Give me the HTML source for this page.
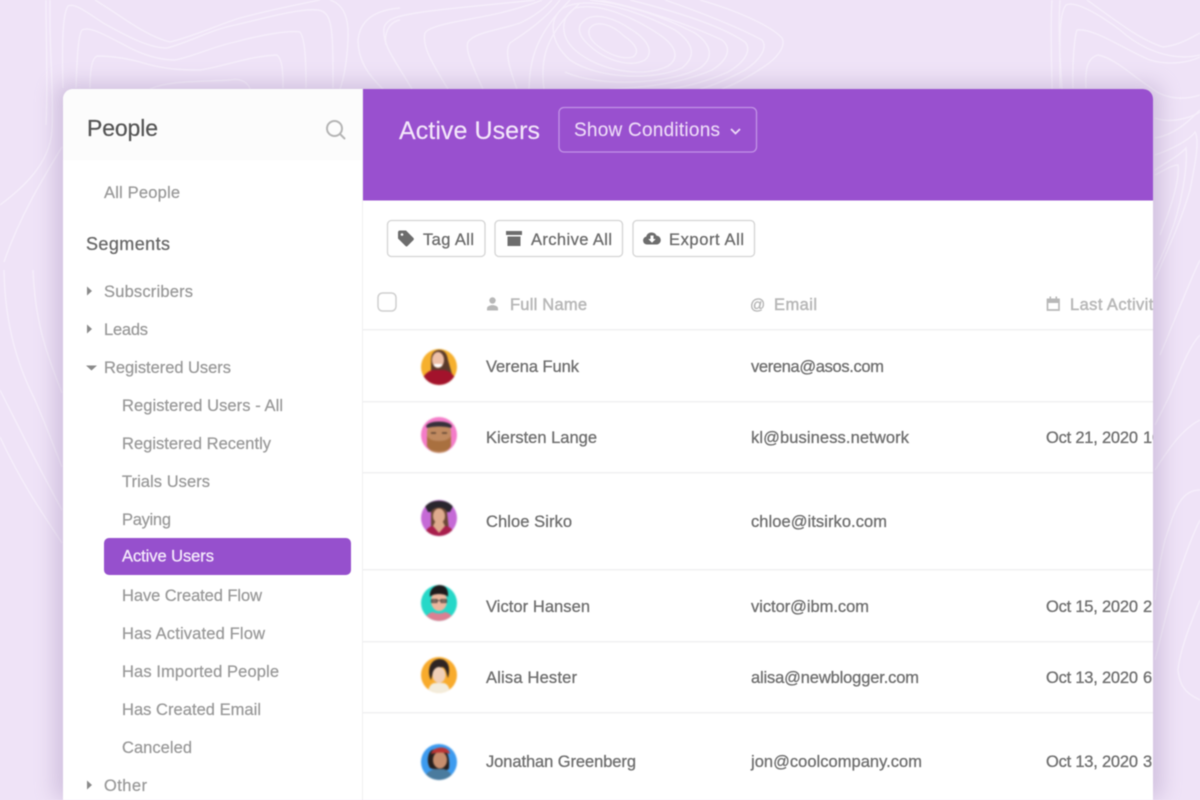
<!DOCTYPE html>
<html lang="en">
<head>
<meta charset="utf-8">
<title>Active Users</title>
<style>
html,body{margin:0;padding:0;width:1200px;height:800px;overflow:hidden;background:#efe3f7}
svg{display:block;position:absolute;left:0;top:0;font-family:"Liberation Sans",sans-serif}
#all{filter:blur(.55px)}
.s{font-size:16.5px;fill:#9a9a9a;stroke:#9a9a9a;stroke-width:.25}
.r{font-size:16.5px;fill:#707070;stroke:#707070;stroke-width:.32}
.h{font-size:16.5px;fill:#b8b8b8;stroke:#b8b8b8;stroke-width:.5}
.b{font-size:16.5px;fill:#6c6c6c;stroke:#6c6c6c;stroke-width:.3}
.t{fill:none;stroke:#f8f2fc;stroke-width:1.4;opacity:.8}
.av{filter:blur(.7px)}
</style>
</head>
<body>
<svg id="all" width="1200" height="800" viewBox="0 0 1200 800" xmlns="http://www.w3.org/2000/svg">
<defs>
<filter id="sh" x="-6%" y="-8%" width="112%" height="116%"><feGaussianBlur stdDeviation="11"/></filter>
<clipPath id="main"><rect x="363" y="89" width="790" height="711"/></clipPath>
<clipPath id="a1"><circle cx="439" cy="367" r="18"/></clipPath>
<clipPath id="a2"><circle cx="439" cy="435" r="18"/></clipPath>
<clipPath id="a3"><circle cx="439" cy="518" r="18"/></clipPath>
<clipPath id="a4"><circle cx="439" cy="603" r="18"/></clipPath>
<clipPath id="a5"><circle cx="439" cy="675" r="18"/></clipPath>
<clipPath id="a6"><circle cx="439" cy="762" r="18"/></clipPath>
</defs>

<rect width="1200" height="800" fill="#efe3f7"/>

<g class="t">
<path d="M50 0C49 50 54 90 52 130C50 165 20 190 0 205"/>
<path d="M46 0C46 40 48 90 46 125"/>
<path d="M62 147C45 175 20 215 4 262"/>
<path d="M63 88C62 50 62 15 68 6C75 2 90 15 105 24C130 38 150 48 167 48C190 42 210 30 235 25C265 18 300 8 318 10C333 12 333 30 333 88"/>
<path d="M95 0C120 15 145 36 170 42C195 36 220 24 240 18C270 10 300 4 320 0"/>
<path d="M76 88C77 60 78 35 82 30C90 26 105 35 130 48C150 58 165 60 175 60C195 56 215 46 235 42C260 35 290 30 300 32C306 40 306 70 306 88"/>
<path d="M90 88C90 70 92 58 97 56C110 56 125 58 140 62C165 70 185 70 200 70C225 66 250 56 277 55C283 60 283 75 283 88"/>
<path d="M150 89C170 80 200 82 230 80C240 78 248 82 250 89"/>
<path d="M330 0C345 5 349 20 348 40C347 60 345 75 340 89"/>
<path d="M400 8C375 10 360 20 358 40C358 60 368 75 383 89"/>
<path d="M400 20C388 22 384 35 386 45"/>
<path d="M4 270C5 330 20 370 35 400C48 430 55 450 62 467"/>
<path d="M33 270C35 320 45 350 62 393"/>
<path d="M0 390C20 430 40 470 62 510"/>
<path d="M0 437C20 480 40 510 62 543"/>
<path d="M412 89C395 60 382 45 384 28C386 18 400 15 430 11C470 6 510 3 535 0"/>
<path d="M448 89C430 60 422 45 425 33C430 24 470 20 500 13C520 8 535 3 542 0"/>
<path d="M483 89C472 65 465 50 468 42C475 32 500 30 520 23C535 16 545 8 552 0"/>
<path d="M517 89C508 65 505 50 510 43C525 33 545 20 560 0"/>
<path d="M529 89C530 60 535 35 570 0"/>
<path d="M544 89C540 60 545 35 580 3"/>
<path d="M590 28C596 20 612 24 624 36C636 44 640 52 633 57C622 60 608 54 598 46C590 40 587 33 590 28Z"/>
<path d="M585 20C595 12 615 18 632 30C648 40 654 52 645 60C630 68 605 60 590 46C578 36 576 26 585 20Z"/>
<path d="M575 8C600 2 635 18 660 35C676 46 680 58 668 66C645 78 600 72 575 50C560 36 560 18 575 8Z"/>
<path d="M563 8C590 -6 640 12 675 30C692 42 698 55 682 68C655 80 600 80 570 60C550 42 548 20 563 8Z"/>
<path d="M590 0C630 4 665 18 695 33C712 45 714 58 700 68C670 84 600 88 565 72"/>
<path d="M600 0C640 8 690 25 722 40C732 48 728 60 712 70C680 84 640 88 610 89"/>
<path d="M630 0C670 10 720 25 745 42C752 50 745 62 728 72C710 80 690 86 670 89"/>
<path d="M665 0C700 12 740 28 762 40C768 48 760 60 745 70C730 78 715 85 700 89"/>
<path d="M700 0C735 10 770 25 782 38C786 46 778 58 762 68C750 76 735 84 722 89"/>
<path d="M1052 0C1050 30 1052 70 1052 89M1060 0C1058 30 1060 60 1062 89"/>
<path d="M1087 0C1115 20 1140 40 1163 47C1180 45 1190 38 1200 33"/>
<path d="M1060 88C1060 50 1058 15 1066 5C1075 0 1100 15 1120 30C1140 48 1170 62 1200 55"/>
<path d="M1073 88C1072 60 1075 35 1077 30C1095 28 1125 50 1150 60C1170 66 1190 62 1200 57"/>
<path d="M1086 88C1085 70 1087 58 1098 55C1115 58 1135 78 1150 87C1165 100 1185 100 1200 95"/>
<path d="M1155 118C1170 124 1190 118 1200 112"/>
<path d="M1155 138C1175 135 1190 120 1200 110"/>
<path d="M1155 155C1170 150 1190 140 1195 132C1200 140 1195 165 1190 190C1180 225 1165 255 1155 280"/>
<path d="M1155 170C1170 160 1180 155 1186 148C1188 170 1180 210 1170 235C1165 250 1160 260 1155 270"/>
<path d="M1155 175C1165 170 1172 165 1178 165C1180 180 1170 210 1160 235"/>
<path d="M1200 260C1190 280 1175 320 1160 355"/>
<path d="M1200 335C1190 345 1180 370 1170 395C1165 405 1160 415 1155 425"/>
<path d="M1200 420C1180 430 1165 455 1155 470"/>
<path d="M1200 490C1180 490 1175 510 1165 540C1160 560 1157 580 1155 600"/>
<path d="M1200 520C1190 540 1180 570 1170 600C1165 620 1160 640 1155 660"/>
<path d="M1200 600C1190 625 1180 650 1178 670C1180 690 1190 695 1200 700"/>
</g>

<rect x="55" y="84" width="1106" height="716" rx="8" fill="#8d74a8" opacity=".32" filter="url(#sh)"/>
<path d="M63 99a10 10 0 0 1 10-10H1143a10 10 0 0 1 10 10V800H63Z" fill="#fff"/>
<path d="M63 99a10 10 0 0 1 10-10H362V160H63Z" fill="#fcfcfc"/>
<rect x="362" y="89" width="1" height="711" fill="#efeff0"/>

<path d="M363 89H1143a10 10 0 0 1 10 10V200.500H363Z" fill="#9950cf"/>

<text x="87" y="136" font-size="23" fill="#555" stroke="#555" stroke-width=".2" textLength="71" lengthAdjust="spacing">People</text>
<g fill="none" stroke="#b5b5b5" stroke-width="2"><circle cx="334.500" cy="128.500" r="7.500"/><path d="M340 134l4.500 4.500" stroke-linecap="round"/></g>
<text class="s" x="104" y="198" textLength="76" lengthAdjust="spacing">All People</text>
<text x="86" y="250" font-size="18" fill="#6a6a6a" stroke="#6a6a6a" stroke-width=".3" textLength="84" lengthAdjust="spacing">Segments</text>

<g fill="#8a8a8a">
<path d="M87 286.500l5 4.500-5 4.500Z"/>
<path d="M87 324.500l5 4.500-5 4.500Z"/>
<path d="M86 365.500h11l-5.500 5Z"/>
<path d="M87 780.500l5 4.500-5 4.500Z"/>
</g>
<text class="s" x="104" y="297" textLength="89" lengthAdjust="spacing">Subscribers</text>
<text class="s" x="104" y="335" textLength="44" lengthAdjust="spacing">Leads</text>
<text class="s" x="104" y="373" textLength="127" lengthAdjust="spacing">Registered Users</text>
<text class="s" x="122" y="411" textLength="161" lengthAdjust="spacing">Registered Users - All</text>
<text class="s" x="122" y="449" textLength="149" lengthAdjust="spacing">Registered Recently</text>
<text class="s" x="122" y="487" textLength="88" lengthAdjust="spacing">Trials Users</text>
<text class="s" x="122" y="525" textLength="49" lengthAdjust="spacing">Paying</text>
<rect x="104" y="538" width="247" height="37" rx="5" fill="#9650cd"/>
<text x="122" y="561.500" font-size="16.500" fill="#f4e9fb" stroke="#f4e9fb" stroke-width=".3" textLength="92" lengthAdjust="spacing">Active Users</text>
<text class="s" x="122" y="601" textLength="140" lengthAdjust="spacing">Have Created Flow</text>
<text class="s" x="122" y="639" textLength="143" lengthAdjust="spacing">Has Activated Flow</text>
<text class="s" x="122" y="677" textLength="157" lengthAdjust="spacing">Has Imported People</text>
<text class="s" x="122" y="715" textLength="139" lengthAdjust="spacing">Has Created Email</text>
<text class="s" x="122" y="753" textLength="70" lengthAdjust="spacing">Canceled</text>
<text class="s" x="104" y="791" textLength="43" lengthAdjust="spacing">Other</text>

<text x="399" y="139" font-size="25" fill="#f3e6fa" stroke="#f3e6fa" stroke-width=".15" textLength="141" lengthAdjust="spacing">Active Users</text>
<rect x="559" y="107.500" width="197.500" height="44.500" rx="5" fill="none" stroke="#c293e6" stroke-width="1.300"/>
<text x="574" y="136" font-size="19" fill="#ecd9f7" stroke="#ecd9f7" stroke-width=".15" textLength="146" lengthAdjust="spacing">Show Conditions</text>
<path d="M731 129l4.500 4.500 4.500-4.500" fill="none" stroke="#ecd9f7" stroke-width="1.800"/>

<g fill="#fff" stroke="#d4d4d4" stroke-width="1.300">
<rect x="387.500" y="220.500" width="97.500" height="36" rx="4"/>
<rect x="495" y="220.500" width="127.500" height="36" rx="4"/>
<rect x="633" y="220.500" width="121.500" height="36" rx="4"/>
</g>
<path d="M398 232.500a2 2 0 0 1 2-2h6l7.500 7.500a1.500 1.500 0 0 1 0 2l-6 6a1.500 1.500 0 0 1-2 0l-7.500-7.500Z" fill="#6d6d6d"/>
<circle cx="402" cy="234.500" r="1.300" fill="#fff"/>
<text class="b" x="423" y="245" textLength="51" lengthAdjust="spacing">Tag All</text>
<path d="M506 231h16v4h-16ZM507.500 236.500h13v9.500h-13Z" fill="#6d6d6d"/>
<text class="b" x="531" y="245" textLength="81" lengthAdjust="spacing">Archive All</text>
<path d="M647 244.500a4 4 0 0 1-.8-7.900 5.500 5.500 0 0 1 10.300-1 4.500 4.500 0 0 1 .7 8.900Z" fill="#6d6d6d"/>
<path d="M650.500 235.500h3v3.500h2.200l-3.700 3.700-3.700-3.700h2.200Z" fill="#fff"/>
<text class="b" x="669" y="245" textLength="75" lengthAdjust="spacing">Export All</text>

<rect x="378" y="293" width="18" height="18" rx="4.500" fill="#fff" stroke="#cfcfcf" stroke-width="1.500"/>
<circle cx="492.500" cy="300.500" r="3.200" fill="#b8b8b8"/>
<path d="M487 310.500v-2.200c0-2 3-3.200 5.500-3.200s5.500 1.200 5.500 3.200v2.200Z" fill="#b8b8b8"/>
<text class="h" x="510" y="310" textLength="77" lengthAdjust="spacing">Full Name</text>
<text x="750" y="309.500" font-size="15" fill="#b8b8b8" stroke="#b8b8b8" stroke-width=".4">@</text>
<text class="h" x="774" y="310" textLength="43" lengthAdjust="spacing">Email</text>
<path d="M1047.500 299.500h11.500v10.500h-11.500Z" fill="none" stroke="#b8b8b8" stroke-width="1.700"/>
<path d="M1047 298.500h12.500v4.500h-12.500ZM1049.500 296.500h1.600v3h-1.600ZM1055.500 296.500h1.600v3h-1.600Z" fill="#b8b8b8"/>
<g clip-path="url(#main)">
<text class="h" x="1070" y="310" textLength="92" lengthAdjust="spacing">Last Activity</text>
<g fill="#f1f1f2">
<rect x="363" y="329" width="790" height="1.500"/>
<rect x="363" y="401" width="790" height="1.500"/>
<rect x="363" y="472" width="790" height="1.500"/>
<rect x="363" y="569" width="790" height="1.500"/>
<rect x="363" y="641" width="790" height="1.500"/>
<rect x="363" y="712" width="790" height="1.500"/>
</g>
<text class="r" x="1046" y="443" textLength="92" lengthAdjust="spacing">Oct 21, 2020</text><text class="r" x="1143" y="443">10</text>
<text class="r" x="1046" y="612" textLength="92" lengthAdjust="spacing">Oct 15, 2020</text><text class="r" x="1143" y="612">2</text>
<text class="r" x="1046" y="683" textLength="92" lengthAdjust="spacing">Oct 13, 2020</text><text class="r" x="1143" y="683">6</text>
<text class="r" x="1046" y="767" textLength="92" lengthAdjust="spacing">Oct 13, 2020</text><text class="r" x="1143" y="767">3</text>
</g>

<text class="r" x="486" y="372" textLength="93" lengthAdjust="spacing">Verena Funk</text>
<text class="r" x="486" y="443" textLength="111" lengthAdjust="spacing">Kiersten Lange</text>
<text class="r" x="486" y="527" textLength="86" lengthAdjust="spacing">Chloe Sirko</text>
<text class="r" x="486" y="612" textLength="104" lengthAdjust="spacing">Victor Hansen</text>
<text class="r" x="486" y="683" textLength="91" lengthAdjust="spacing">Alisa Hester</text>
<text class="r" x="486" y="767" textLength="150" lengthAdjust="spacing">Jonathan Greenberg</text>

<text class="r" x="751" y="372" textLength="133" lengthAdjust="spacing">verena@asos.com</text>
<text class="r" x="751" y="443" textLength="158" lengthAdjust="spacing">kl@business.network</text>
<text class="r" x="751" y="527" textLength="136" lengthAdjust="spacing">chloe@itsirko.com</text>
<text class="r" x="751" y="612" textLength="118" lengthAdjust="spacing">victor@ibm.com</text>
<text class="r" x="751" y="683" textLength="168" lengthAdjust="spacing">alisa@newblogger.com</text>
<text class="r" x="751" y="767" textLength="171" lengthAdjust="spacing">jon@coolcompany.com</text>

<g class="av">
<g clip-path="url(#a1)">
<rect x="421" y="349" width="36" height="36" fill="#f6b02e"/>
<path d="M431 378V360c0-7 4-10 8-10 6 0 8 4 9 10l4 14Z" fill="#5a3a2a"/>
<ellipse cx="438" cy="360" rx="6" ry="8" fill="#eec0a8"/>
<path d="M434 364h8v2c-2 1.500-6 1.500-8 0Z" fill="#fff"/>
<path d="M421 386c0-9 6-15 12-16h11c7 1 13 7 13 16Z" fill="#a3132c"/>
</g>
<g clip-path="url(#a2)">
<rect x="421" y="417" width="36" height="36" fill="#f47cc8"/>
<rect x="427" y="422" width="24" height="31" rx="10" fill="#c08a60"/>
<path d="M427 436c2 3 5 5 12 5s10-2 12-5v10c-3 7-21 7-24 0Z" fill="#a9703f"/>
<path d="M426 426c3-6 23-6 26 0l-1 2c-6-2-18-2-24 0Z" fill="#35303a"/>
<path d="M431 433h5M442 433h5" stroke="#4a3528" stroke-width="1.300"/>
</g>
<g clip-path="url(#a3)">
<rect x="421" y="500" width="36" height="36" fill="#c56ad6"/>
<path d="M425 506c6-7 22-7 28 0l-3 6H428Z" fill="#2a262e"/>
<path d="M431 530V512c2-6 14-6 16 0l2 18Z" fill="#6a4634"/>
<ellipse cx="439" cy="516" rx="6" ry="7.500" fill="#dfab8e"/>
<path d="M424 537c1-8 6-11 9-11l6 6 6-6c4 0 9 3 10 11Z" fill="#a81e4c"/>
<path d="M433 526l6 7 6-7-2-4h-8Z" fill="#dfab8e"/>
</g>
<g clip-path="url(#a4)">
<rect x="421" y="585" width="36" height="36" fill="#26d8c8"/>
<ellipse cx="439" cy="601" rx="8" ry="10" fill="#ecb79e"/>
<path d="M430 597c-1-9 6-12 10-12s9 3 8 12c-3-4-15-4-18 0Z" fill="#1e1a1c"/>
<path d="M431.500 599.500h5.500v3h-5.500ZM441 599.500h5.500v3h-5.500ZM437 600.500h4" fill="#8a7468" stroke="#38302e" stroke-width=".8"/>
<path d="M424 622c0-6 5-9 9-10 3 2 9 2 12 0 4 1 9 4 9 10Z" fill="#dc7f92"/>
</g>
<g clip-path="url(#a5)">
<rect x="421" y="657" width="36" height="36" fill="#f8ab2c"/>
<path d="M431 680c-4-8-2-20 8-21 9 0 12 8 9 19-2-6-2-10-6-11-4 3-8 3-9 5Z" fill="#2d2423"/>
<ellipse cx="439" cy="675" rx="6.500" ry="8" fill="#f0d0b8"/>
<path d="M428 694c0-8 4-11 7-11h8c3 0 7 3 7 11Z" fill="#f3ecdc"/>
</g>
<g clip-path="url(#a6)">
<rect x="421" y="744" width="36" height="36" fill="#3d9bef"/>
<path d="M430 768c-4-6-2-16 2-18l8-2c8 1 10 10 9 20-1 3-4 2-5 1H433Z" fill="#28201e"/>
<ellipse cx="440" cy="760" rx="7" ry="8.500" fill="#c78e6e"/>
<path d="M431 754c1-7 14-9 18-3l1 3c-5-2-13-2-19 0Z" fill="#bb3434"/>
<path d="M424 781c0-7 6-11 11-12h8c5 1 10 5 10 12Z" fill="#4a7b9e"/>
</g>
</g>
</svg>
</body>
</html>
